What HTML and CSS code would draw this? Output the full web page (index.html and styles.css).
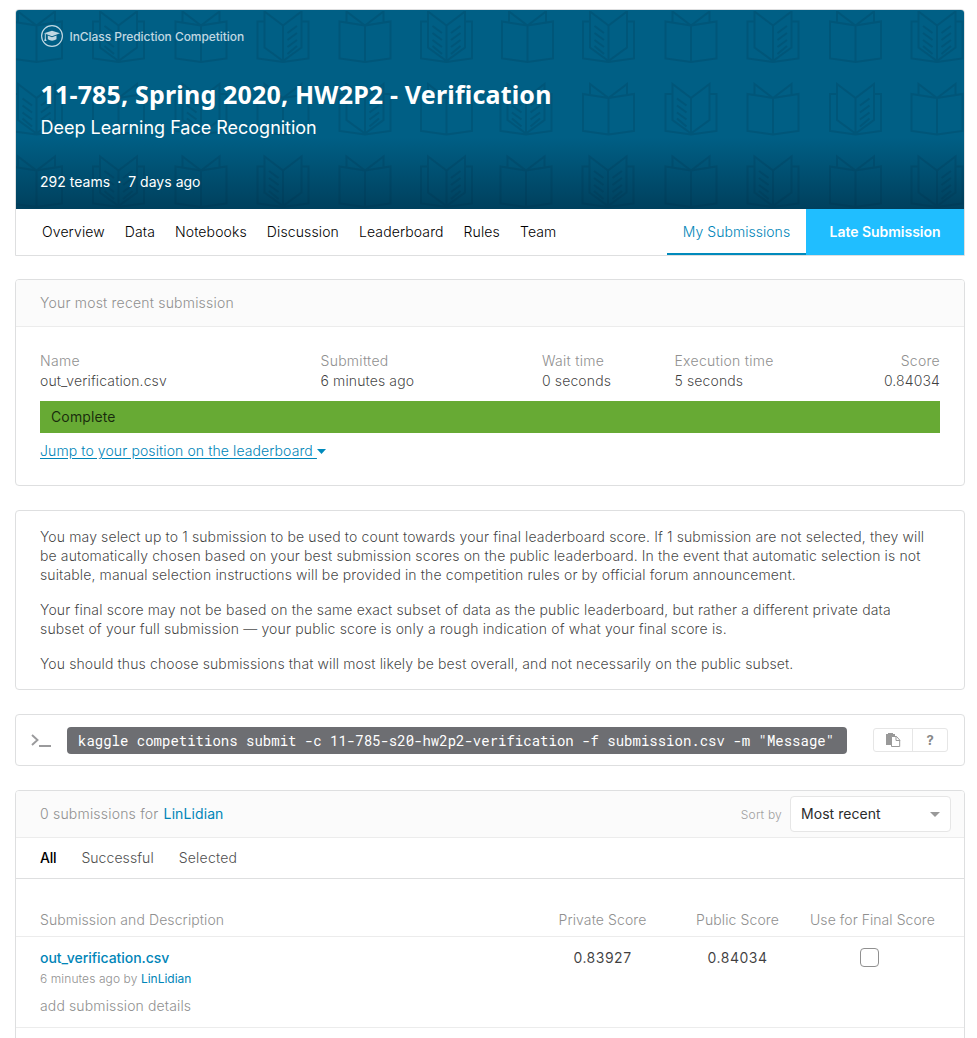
FILE: index.html
```html
<!DOCTYPE html>
<html lang="en">
<head>
<meta charset="utf-8">
<title>11-785, Spring 2020, HW2P2 - Verification</title>
<link rel="stylesheet" href="styles.css">
</head>
<body>
<svg class="defs" width="0" height="0" aria-hidden="true">
  <defs>
    <g id="closed"><path d="M-25.5 12.500L0 16.500L25.500 12.500V49.500L0 53L-25.500 49.500ZM0 16.500V53M-18.500 12.500V2.500L0 16.500L18.500 2.500V12.500"/></g>
    <g id="open"><path d="M-18.500 12.500H-25.500V49.500L0 53L25.500 49.500V12.500H18.500M0 16.500L-18.500 2.500V38.500L0 52L18.500 38.500V2.500ZM0 16.500V52"/></g>
    <g id="lines"><path d="M4.500 24L14 17M4.500 31L14 24M4.500 38L14 31M4.500 45L14 37"/></g>
    <g id="right"><use href="#open"/><use href="#lines"/></g>
    <g id="left"><use href="#open"/><use href="#lines" transform="scale(-1 1)"/></g>
    <g id="both"><use href="#right"/><use href="#lines" transform="scale(-1 1)"/></g>
  </defs>
</svg>
<main class="page">
  <section class="hero">
    <header class="banner">
      <svg class="pattern" width="948" height="198" viewBox="16 11 948 198" aria-hidden="true">
        <g fill="none" stroke="#002a40" stroke-opacity=".17" stroke-width="2">
          <g transform="translate(0 9)"><use href="#closed" x="36.500"/><use href="#left" x="118.500"/><use href="#closed" x="201"/><use href="#right" x="283"/><use href="#closed" x="365"/><use href="#both" x="446.500"/><use href="#closed" x="527.500"/><use href="#left" x="608.500"/><use href="#closed" x="691"/><use href="#right" x="773"/><use href="#closed" x="855.500"/><use href="#both" x="937"/></g>
          <g transform="translate(0 81.500)"><use href="#both" x="36.500"/><use href="#closed" x="118.500"/><use href="#left" x="201"/><use href="#closed" x="283"/><use href="#right" x="365"/><use href="#closed" x="446.500"/><use href="#both" x="526"/><use href="#closed" x="608.500"/><use href="#left" x="691"/><use href="#closed" x="773"/><use href="#right" x="855.500"/><use href="#closed" x="937"/></g>
          <g transform="translate(0 154)"><use href="#closed" x="36.500"/><use href="#both" x="118.500"/><use href="#closed" x="201"/><use href="#left" x="283"/><use href="#closed" x="365"/><use href="#right" x="446.500"/><use href="#closed" x="526"/><use href="#both" x="608"/><use href="#closed" x="691"/><use href="#left" x="773"/><use href="#closed" x="855.500"/><use href="#right" x="937"/></g>
        </g>
      </svg>
      <div class="banner-text">
        <div class="kind">
          <svg class="cap" width="24" height="24" viewBox="0 0 24 24"><circle cx="12" cy="12" r="10.400" fill="none" stroke="currentColor" stroke-width="1.200"/><path fill="currentColor" d="M12 6.800L4 9.300L12 12.200L20 9.300ZM7.800 11.500V15.300Q12 18 16.500 15.300V11.500L12 13.200ZM4.800 9.500H5.800V14.500L6.600 17H4.200L4.800 14.500Z"/></svg>
          <span>InClass Prediction Competition</span>
        </div>
        <h1><span>11-785, Spring 2020, HW2P2 - Verification</span></h1>
        <p class="subtitle"><span>Deep Learning Face Recognition</span></p>
        <p class="meta"><span>292 teams</span><span class="dot">·</span><span>7 days ago</span></p>
      </div>
    </header>
    <nav class="tabs">
      <div class="links"><a>Overview</a><a>Data</a><a>Notebooks</a><a>Discussion</a><a>Leaderboard</a><a>Rules</a><a>Team</a></div>
      <a class="mine">My Submissions</a>
      <a class="late">Late Submission</a>
    </nav>
  </section>

  <section class="card recent">
    <div class="card-head">Your most recent submission</div>
    <div class="recent-body">
      <div class="facts">
        <div><span class="label">Name</span><span>out_verification.csv</span></div>
        <div><span class="label">Submitted</span><span>6 minutes ago</span></div>
        <div><span class="label">Wait time</span><span>0 seconds</span></div>
        <div><span class="label">Execution time</span><span>5 seconds</span></div>
        <div class="end"><span class="label">Score</span><span>0.84034</span></div>
      </div>
      <div class="status">Complete</div>
      <a class="jump"><span class="jump-text">Jump to your position on the leaderboard&nbsp;</span><svg width="9" height="5" viewBox="0 0 9 5"><path d="M0 0H9L4.500 5Z" fill="#008abc"/></svg></a>
    </div>
  </section>

  <section class="card notes">
    <p>You may select up to 1 submission to be used to count towards your final leaderboard score. If 1 submission are not selected, they will<br>be automatically chosen based on your best submission scores on the public leaderboard. In the event that automatic selection is not<br>suitable, manual selection instructions will be provided in the competition rules or by official forum announcement.</p>
    <p>Your final score may not be based on the same exact subset of data as the public leaderboard, but rather a different private data<br>subset of your full submission — your public score is only a rough indication of what your final score is.</p>
    <p>You should thus choose submissions that will most likely be best overall, and not necessarily on the public subset.</p>
  </section>

  <section class="card command">
    <svg class="prompt" width="20" height="14" viewBox="0 0 20 14"><path d="M1 2L6.500 7L1 12M8 13H20" fill="none" stroke="#9a9a9c" stroke-width="1.900"/></svg>
    <code>kaggle competitions submit -c 11-785-s20-hw2p2-verification -f submission.csv -m "Message"</code>
    <div class="buttons">
      <button aria-label="Copy"><svg width="15" height="15" viewBox="0 0 15 15"><path d="M0 1H9V4H5V12H0Z" fill="#999"/><path d="M2 0H7V2H2Z" fill="#999"/><path d="M5.500 3.500H10.500L13.700 7V13.500H5.500Z" fill="#fff" stroke="#999"/><path d="M10 3V7.500H14.200" fill="none" stroke="#999"/></svg></button>
      <button class="help">?</button>
    </div>
  </section>

  <section class="card list">
    <div class="card-head list-head">
      <span>0 submissions for</span><a class="user">LinLidian</a>
      <span class="sort">Sort by</span>
      <div class="select"><span>Most recent</span><svg width="10" height="5" viewBox="0 0 10 5"><path d="M0 0H10L5 5Z" fill="#999"/></svg></div>
    </div>
    <div class="filters"><a class="on">All</a><a>Successful</a><a>Selected</a></div>
    <div class="row thead"><span>Submission and Description</span><span>Private Score</span><span>Public Score</span><span class="final">Use for Final Score</span></div>
    <div class="row entry">
      <div class="desc"><a class="file">out_verification.csv</a><p class="by">6 minutes ago by <a>LinLidian</a></p><p class="add">add submission details</p></div>
      <span class="score">0.83927</span><span class="score">0.84034</span><span class="box"></span>
    </div>
  </section>
</main>
</body>
</html>
```
FILE: styles.css
```css
* { box-sizing: border-box; }
html { overflow: hidden; }
body { margin: 0; height: 1038px; overflow: hidden; background: #fff; color: rgba(0,0,0,.75); font: 300 14px/20px Inter, sans-serif; letter-spacing: .13px; }
h1, p { margin: 0; font-weight: inherit; }
.defs { position: absolute; }
.page { display: flex; flex-direction: column; gap: 24px; padding: 9px 12px 0 15px; }
.card { border: 1px solid #dedfe0; border-radius: 4px; background: #fff; }
.card-head { height: 47px; padding: 0 24px; line-height: 46px; background: #fbfbfb; border-bottom: 1px solid #ececec; border-radius: 3px 3px 0 0; color: #909090; letter-spacing: .2px; }

.hero { height: 247px; margin-bottom: -1px; border: 1px solid #dedfe0; border-radius: 4px 4px 0 0; }
.banner { display: grid; height: 199px; overflow: hidden; background: linear-gradient(#005f85 0 64%, #00405d 100%); border-radius: 3px 3px 0 0; }
.pattern, .banner-text { grid-area: 1 / 1; }
.pattern { margin-top: 1px; }
.banner-text { z-index: 1; padding: 14px 24px; color: #fff; }
.kind { display: flex; align-items: center; height: 24px; gap: 5.500px; font-size: 12px; font-weight: 500; letter-spacing: -.06px; line-height: 26px; color: #c0d8e2; }
.kind span { padding-top: 1px; }
.banner h1 { margin-top: 29px; padding-left: .5px; font: 700 25px/34px "Noto Sans", sans-serif; letter-spacing: .18px; }
.subtitle { margin-top: 5px; padding-left: .5px; font-size: 18px; line-height: 24px; font-weight: 400; letter-spacing: -.01px; }
.meta { display: flex; gap: 7px; margin-top: 32px; font-weight: 400; line-height: 20px; letter-spacing: .02px; }
.tabs { display: flex; height: 46px; line-height: 46px; color: #000; }
.links { display: flex; gap: 20px; flex: 1; padding-left: 26px; letter-spacing: .12px; }
.mine { width: 139px; text-align: center; color: #0085b8; border-bottom: 2px solid #008abc; letter-spacing: .03px; }
.late { width: 158px; text-align: center; color: #fff; font-weight: 600; background: #20beff; letter-spacing: -.03px; }

.recent { height: 207px; }
.recent-body { padding: 24px 24px 0; }
.facts { display: grid; grid-template-columns: 280.500px 221.500px 132.500px 1fr auto; letter-spacing: .12px; }
.facts div { display: flex; flex-direction: column; }
.label { color: #909090; letter-spacing: .28px; }
.facts .end { text-align: right; }
.status { height: 32px; margin-top: 10px; padding-left: 11px; line-height: 32px; background: #67aa34; font-weight: 400; }
.jump { display: flex; align-items: center; height: 20px; margin-top: 8px; color: #0085b8; letter-spacing: .1px; }
.jump-text { text-decoration: underline; text-underline-offset: 2px; }

.notes { height: 180px; padding: 16px 24px; display: flex; flex-direction: column; gap: 16px; line-height: 19px; white-space: nowrap; }
.notes p:first-child { letter-spacing: .12px; }
.notes p:nth-child(2) { letter-spacing: .15px; }
.notes p:last-child { letter-spacing: .11px; }

.command { display: flex; align-items: center; height: 52px; padding: 0 16px 0 15px; }
.command code { width: 780px; height: 27px; margin-left: 16px; padding-left: 11px; border-radius: 4px; background: #6d6e72; color: #fff; font: 400 14px/27px "Roboto Mono", "DejaVu Sans Mono", monospace; letter-spacing: 0; white-space: nowrap; }
.buttons { display: flex; margin-left: auto; width: 75px; height: 24px; border: 1px solid #e6e6e6; border-radius: 3px; }
.buttons button { display: grid; place-items: center; width: 39px; padding: 0; border: 0; background: none; color: #888; font: 700 13px Inter, sans-serif; }
.buttons .help { width: 35px; border-left: 1px solid #e6e6e6; }

.list { height: 260px; border-radius: 4px 4px 0 0; }
.list-head { display: flex; padding-right: 13px; }
.user { margin-left: 5px; font-weight: 400; color: #0085b8; letter-spacing: .1px; }
.sort { margin-left: auto; font-size: 12px; line-height: 48px; color: #a0a0a0; }
.select { display: flex; align-items: center; justify-content: space-between; width: 161px; height: 36px; margin: 5px 0 0 8px; padding: 0 10px; border: 1px solid #e6e6e6; border-radius: 4px; background: #fff; color: #2b2b2b; line-height: 34px; font-weight: 400; letter-spacing: .05px; }
.filters { display: flex; gap: 25px; height: 41px; padding: 0 24px; line-height: 40px; border-bottom: 1px solid #dedfe0; color: #505050; letter-spacing: .07px; }
.filters .on { color: #000; font-weight: 500; letter-spacing: -.2px; }
.filters a:last-child { letter-spacing: .2px; }
.row { display: grid; grid-template-columns: 495px 135px 135px 129px; padding-left: 24px; text-align: center; border-bottom: 1px solid #ececec; }
.row > :first-child { text-align: left; }
.thead { height: 58px; padding-top: 31px; color: #909090; letter-spacing: .1px; }
.thead .final { padding-left: 5px; letter-spacing: .05px; white-space: nowrap; }
.entry { height: 91px; padding-top: 11px; font-weight: 400; }
.score { letter-spacing: .5px; }
.file { font-weight: 500; color: #0085b8; letter-spacing: -.05px; }
.by { font-size: 12px; line-height: 22px; font-weight: 300; color: #909090; letter-spacing: .09px; }
.by a { font-weight: 400; color: #0085b8; letter-spacing: 0; }
.add { margin-top: 6px; font-weight: 300; color: #909090; }
.box { width: 19px; height: 19px; border: 1.500px solid #909090; border-radius: 4px; justify-self: center; }
```
